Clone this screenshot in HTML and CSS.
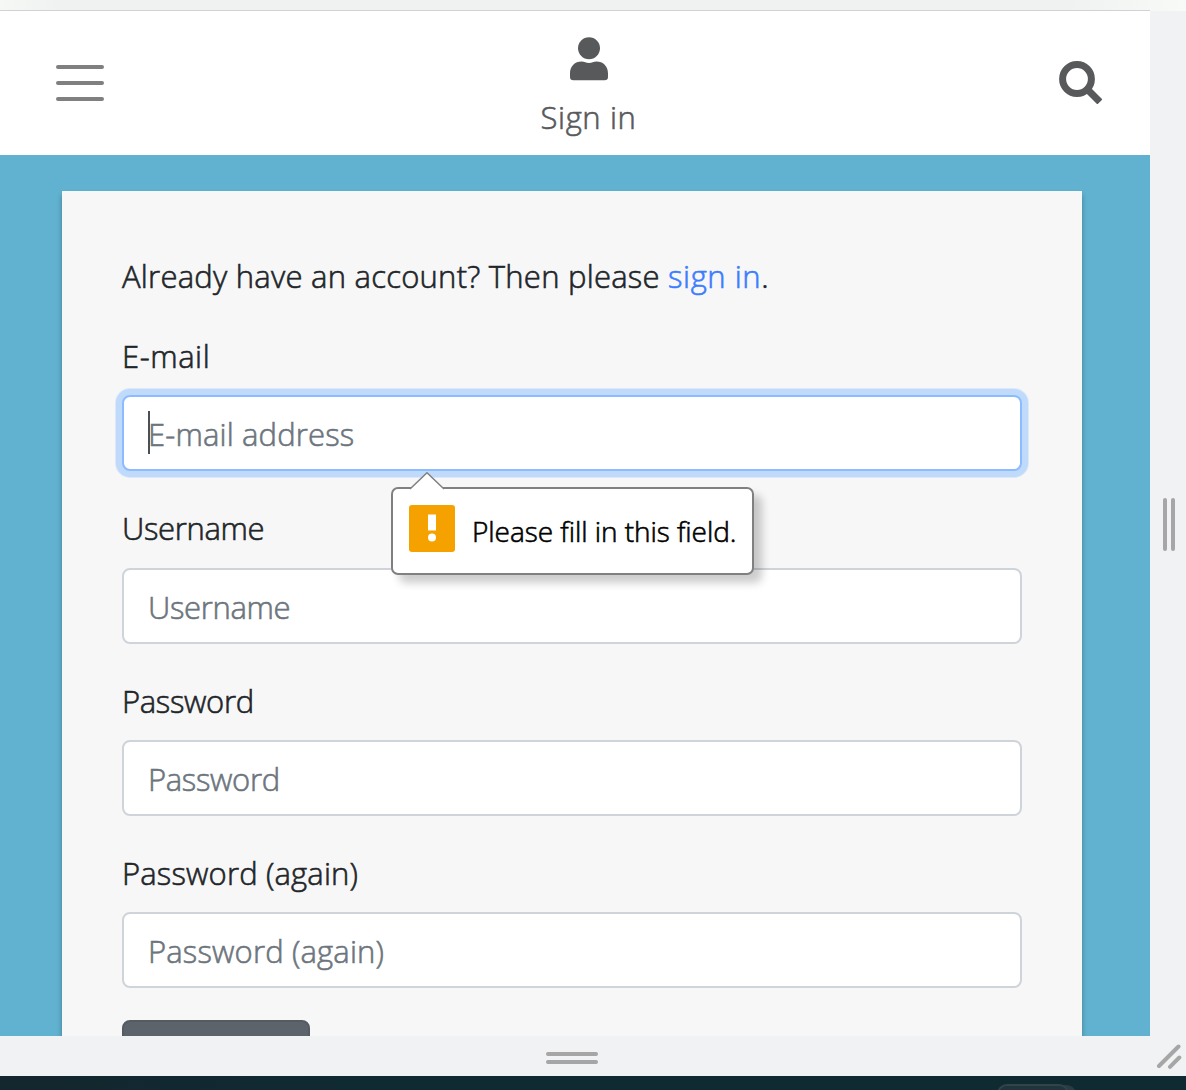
FILE: index.html
```html
<!DOCTYPE html>
<html lang="en">
<head>
<meta charset="utf-8">
<title>Sign up</title>
<link rel="stylesheet" href="styles.css">
</head>
<body>
<div class="toolbar-edge"></div>
<div class="device">
  <div class="viewport">
    <header class="header">
      <button class="menu" aria-label="Menu"><span></span><span></span><span></span></button>
      <a class="account" href="#">
        <svg width="40" height="44" viewBox="0 0 40 44" fill="#58595b"><circle cx="20" cy="11.300" r="11"/><path d="M1 36.500C1 29 6 24.500 12.500 24.500C15.500 24.500 17 26 20 26C23 26 24.500 24.500 27.500 24.500C34 24.500 39 29 39 36.500V40Q39 43.300 35.500 43.300H4.500Q1 43.300 1 40Z"/></svg>
        <span class="account-label">Sign in</span>
      </a>
      <svg class="search" width="44" height="44" viewBox="0 0 44 44"><circle cx="18" cy="18" r="14.400" stroke-width="7" fill="none" stroke="#58595b"/><rect x="24" y="-3.700" width="32.500" height="7.400" rx="1.500" transform="rotate(45) translate(1.500 0)" fill="#58595b" clip-path="inset(0 0 0 17px)"/></svg>
    </header>
    <main class="main">
      <form class="card">
        <p class="intro"><span class="t-intro">Already have an account? Then please </span><a class="t-link" href="#">sign in</a>.</p>
        <div class="group">
          <label class="t-email" for="email">E-mail</label>
          <div class="field">
            <input class="input focused t-address" id="email" placeholder="E-mail address">
            <span class="caret"></span>
            <div class="tip">
              <svg class="tip-arrow" width="36" height="18" viewBox="0 0 36 18"><path d="M1 17L18 0.800L35 17V18H1Z" fill="#fff"/><path d="M1 17L18 0.800L35 17" fill="none" stroke="#808080" stroke-width="1.500"/></svg>
              <svg class="tip-icon" width="46" height="47" viewBox="0 0 46 47"><rect width="46" height="47" rx="3" fill="#f5a100"/><path d="M19 9.500h8v16h-8z" fill="#fff"/><circle cx="23" cy="32.500" r="4" fill="#fff"/></svg>
              <span class="tip-text">Please fill in this field.</span>
            </div>
          </div>
        </div>
        <div class="group">
          <label class="t-user" for="user">Username</label>
          <input class="input t-user" id="user" placeholder="Username">
        </div>
        <div class="group">
          <label class="t-pass" for="pass">Password</label>
          <input class="input t-pass" id="pass" placeholder="Password">
        </div>
        <div class="group">
          <label class="t-again" for="again">Password (again)</label>
          <input class="input t-again" id="again" placeholder="Password (again)">
        </div>
        <button class="submit" type="button" aria-label="Submit"></button>
      </form>
    </main>
  </div>
  <div class="handle-right"><i></i><i></i></div>
  <div class="handle-bottom"><i></i><i></i></div>
  <div class="handle-corner"><svg width="26" height="26" viewBox="0 0 26 26" stroke="#a6a6a6" stroke-width="4" stroke-linecap="round"><path d="M3 23L22.500 3.500M14 23.800L23.300 14.500"/></svg></div>
</div>
<div class="desktop"><span class="tab"></span></div>
</body>
</html>
```
FILE: styles.css
```css
* { box-sizing: border-box; }
body {
  margin: 0;
  width: 1186px;
  height: 1090px;
  overflow: hidden;
  font-family: "Open Sans", "Noto Sans", sans-serif;
  font-size: 31px;
  font-weight: 300;
  -webkit-text-stroke: 0.6px currentColor;
  line-height: 48px;
  color: #212529;
  background: #f1f2f4;
}
a { text-decoration: none; }
.toolbar-edge { height: 11px; background: linear-gradient(90deg, #f6f8f6, #f0f2f1 5%, #f0f2f1 90%, #f8faf8); }
.device {
  display: grid;
  grid-template: 1025px 40px / 1150px 36px;
}
.viewport { overflow: hidden; background: #60b2d0; box-shadow: 0 -1px #d1d3d2; clip-path: inset(-1px 0 0); }
.header {
  display: flex;
  justify-content: space-between;
  align-items: center;
  height: 144px;
  padding: 0 47px 0 56px;
  background: #fff;
}
.menu {
  display: flex;
  flex-direction: column;
  gap: 12px;
  padding: 0;
  border: 0;
  background: none;
}
.menu span { width: 48px; height: 4px; border-radius: 2px; background: #808080; }
.account {
  display: flex;
  flex-direction: column;
  align-items: center;
  width: 110px;
  gap: 12px;
  margin-left: 14px;
  padding-top: 4px;
  color: #58595b;
}
.account svg { display: block; }
.account-label { line-height: 48px; margin-bottom: -8px; white-space: nowrap; letter-spacing: 0.6px; }
.main { padding: 36px 68px 0 62px; }
.card {
  height: 1000px;
  padding: 60px;
  background: #f7f7f7;
  box-shadow: 0 4px 5px rgba(0, 0, 0, .3);
}
.intro { margin: 0 0 32px; padding-top: 1px; height: 48px; white-space: nowrap; }
.intro a { color: #3b7dff; }
.group { display: flex; flex-direction: column; margin-bottom: 32px; }
.group:nth-of-type(1) { margin-bottom: 33px; }
.group label { height: 48px; margin-bottom: 16px; padding-top: 1px; }
.group label.t-user { padding-top: 0; }
.field { position: relative; display: flex; }
.input {
  width: 900px;
  height: 76px;
  padding: 2px 24px 0;
  border: 2px solid #ced4da;
  border-radius: 8px;
  outline: 0;
  background: #fff;
  font-family: inherit;
  font-size: inherit;
  font-weight: inherit;
}
.input::placeholder { color: #6c757d; opacity: 1; -webkit-text-stroke: 0.6px #6c757d; }
.t-intro { letter-spacing: 0.24px; }
.t-link, .t-email { letter-spacing: 0.55px; }
.t-address, .t-again { letter-spacing: 0.15px; }
.t-user, .t-pass { letter-spacing: -0.35px; }
.focused { border-color: #8bbcff; box-shadow: 0 0 0 6px #bfdafb, 0 0 0 7px #dce9f9; }
.caret { position: absolute; left: 26px; top: 16px; width: 2px; height: 43px; background: #495057; }
.tip {
  position: absolute;
  left: 269px;
  top: 92px;
  display: flex;
  gap: 17px;
  width: 363px;
  height: 88px;
  padding: 16px;
  border: 2px solid #808080;
  border-radius: 7px;
  background: #fff;
  box-shadow: 8px 8px 8px rgba(0, 0, 0, .2);
  color: #000;
}
.tip-arrow { position: absolute; left: 16px; top: -17px; }
.tip-icon { flex: none; }
.tip-text { font-size: 28px; line-height: 52px; white-space: nowrap; letter-spacing: -0.05px; }
.submit { display: block; width: 188px; height: 76px; border: 2px solid #545b62; border-radius: 8px; background: #5c636a; }
.handle-right, .handle-bottom, .handle-corner { display: flex; align-items: center; justify-content: center; }
.handle-right { gap: 4px; padding: 2px 0 0 2px; }
.handle-right i { width: 4px; height: 53px; border-radius: 2px; background: #a6a6a6; }
.handle-bottom { flex-direction: column; gap: 4px; padding: 4px 6px 0 0; }
.handle-bottom i { width: 52px; height: 4px; border-radius: 2px; background: #a6a6a6; }
.handle-corner { padding-left: 2px; }
.desktop { height: 14px; padding: 8px 0 0 997px; overflow: hidden; background: linear-gradient(90deg, #14262e, #102a32 30%); }
.tab { display: block; width: 72px; height: 20px; border: 2px solid #30444c; border-radius: 10px; background: #20343b; box-shadow: 8px 0 0 -1px #273c44; }
```
